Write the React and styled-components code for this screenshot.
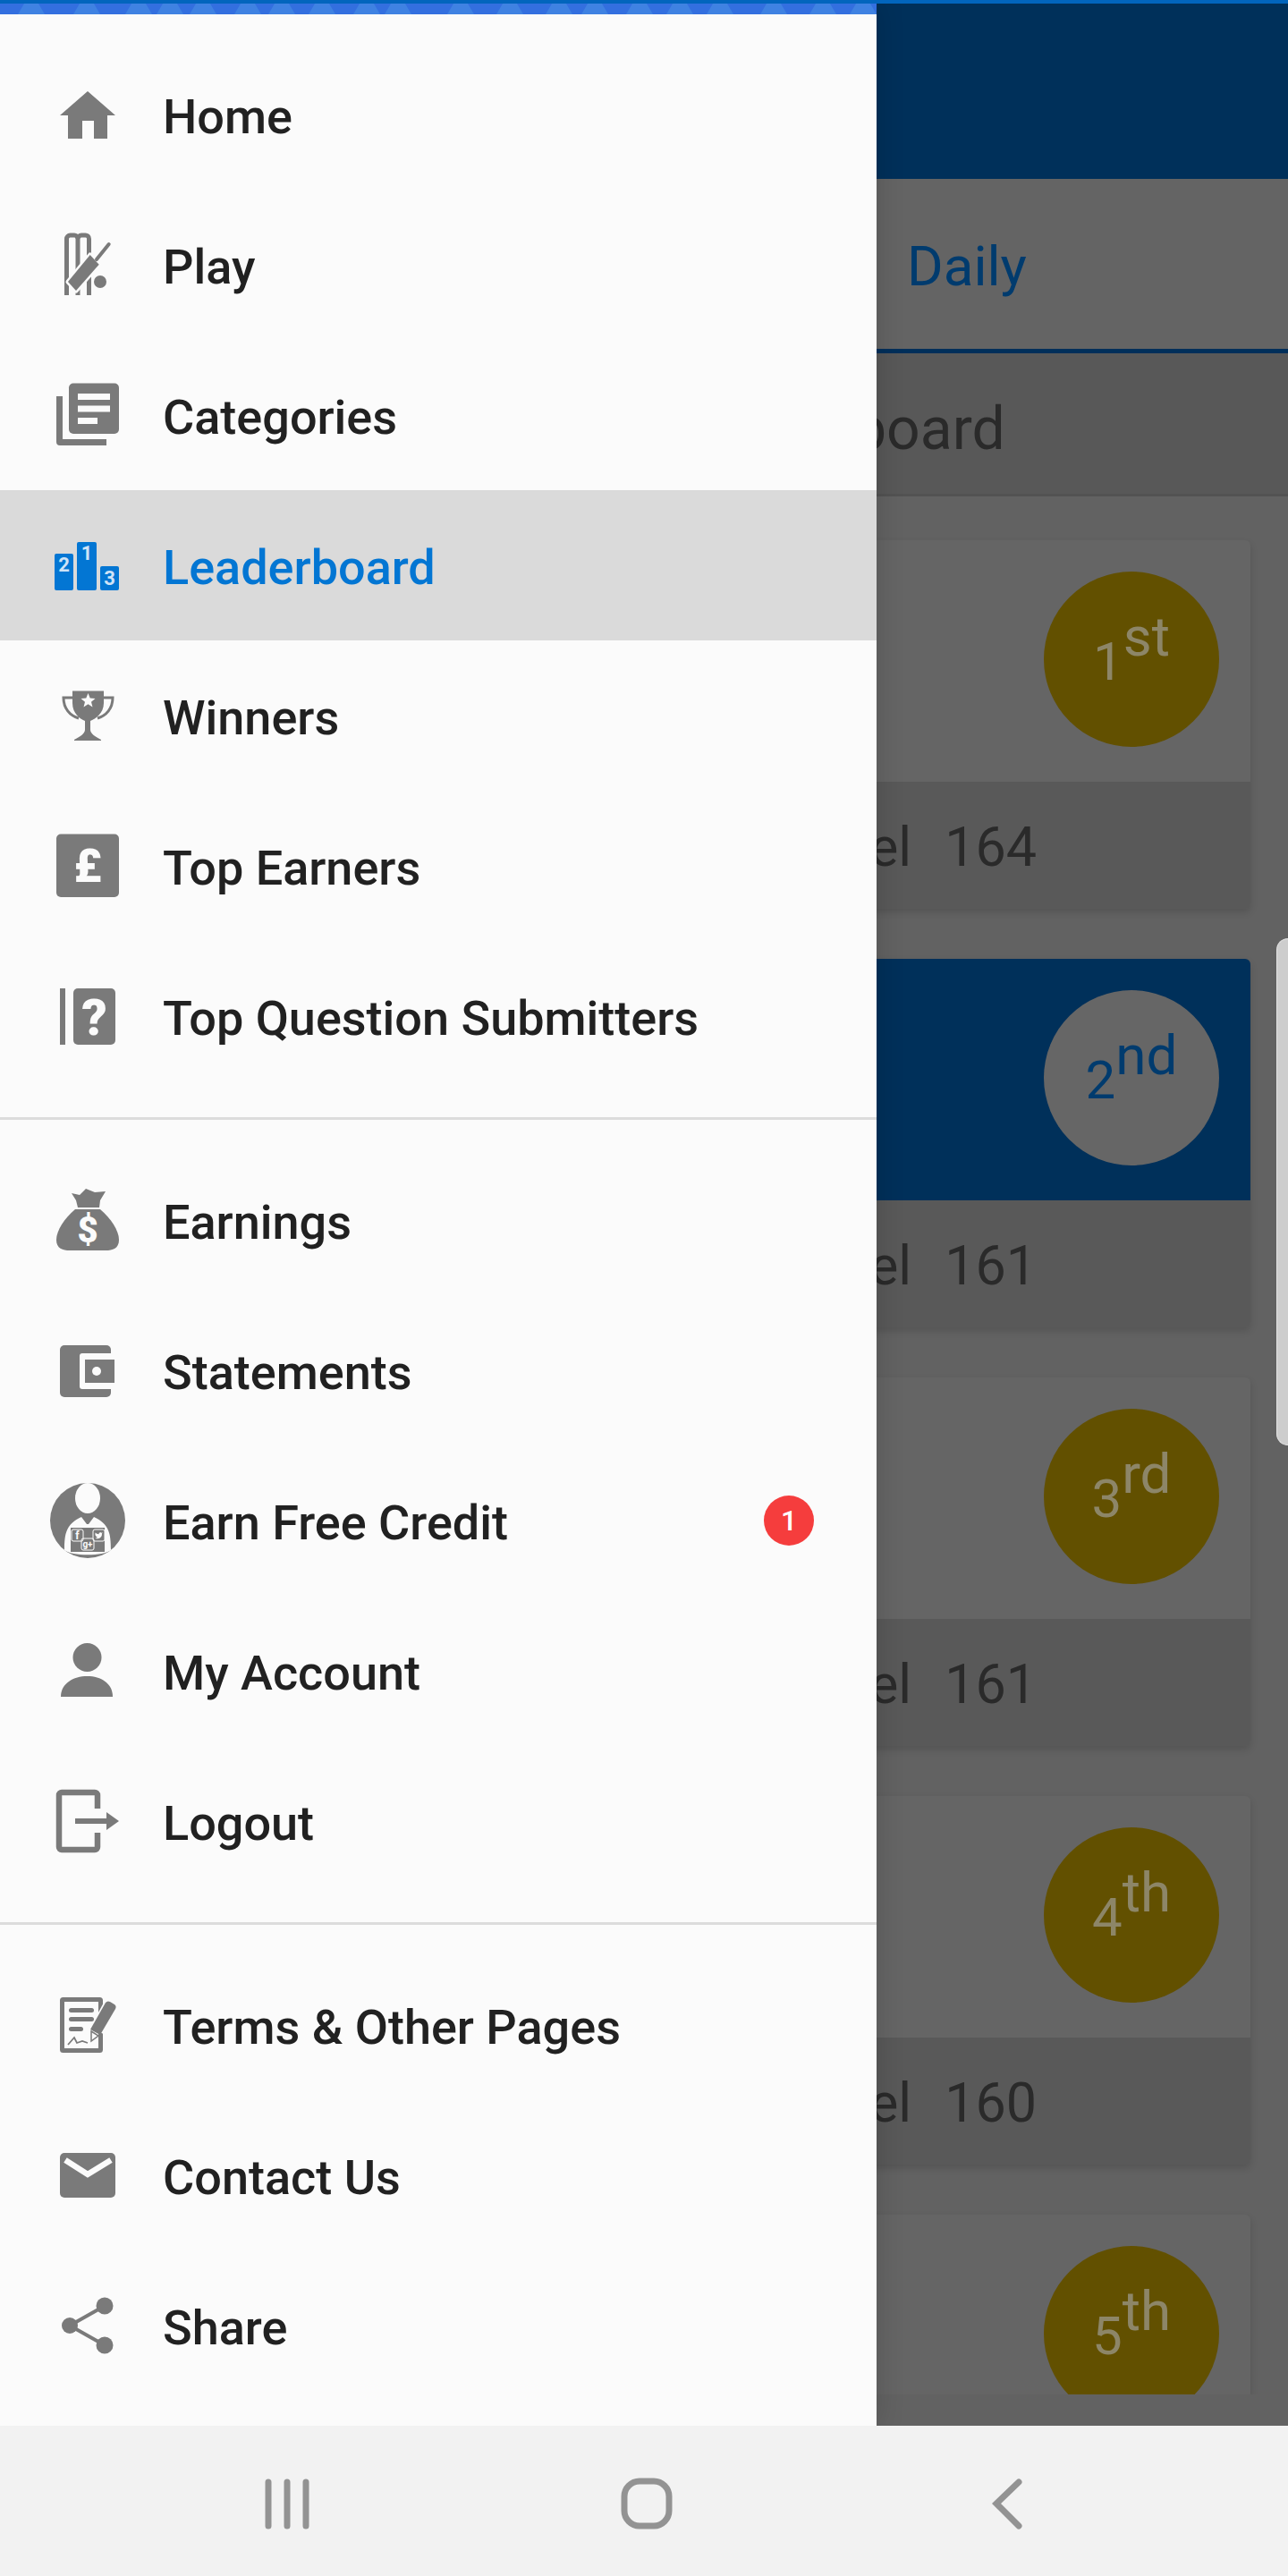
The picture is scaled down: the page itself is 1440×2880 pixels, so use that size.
import React from "react";
import styled, { createGlobalStyle } from "styled-components";

const Global = createGlobalStyle`
  html, body { margin: 0; padding: 0; background: #f2f2f2; }
  body { font-family: Roboto, "Liberation Sans", sans-serif; }
  * { box-sizing: border-box; }
`;

const Screen = styled.div`
  width: 1440px;
  height: 2880px;
  display: flex;
  flex-direction: column;
  overflow: hidden;
`;
const StatusStrip = styled.div`
  height: 4px;
  flex: none;
  background: #0265bd;
`;
const Main = styled.div`
  position: relative;
  flex: 1;
  min-height: 0;
  overflow: hidden;
`;

/* page under the drawer, dimmed */
const Page = styled.div`
  height: 100%;
  display: flex;
  flex-direction: column;
  background: #626262;
`;
const AppBar = styled.div`
  height: 196px;
  flex: none;
  background: #00305a;
`;
const Tabs = styled.div`
  height: 195px;
  flex: none;
  display: flex;
  align-items: center;
  padding: 6px 0 0 1014px;
  background: #646464;
  border-bottom: 5px solid #002f5a;
`;
const Tab = styled.span`
  font-size: 62px;
  line-height: 70px;
  color: #003b6e;
`;
const TitleBar = styled.div`
  height: 160px;
  flex: none;
  display: flex;
  align-items: center;
  padding: 12px 0 0 753px;
  background: #585858;
  border-bottom: 3px solid #525252;
`;
const Title = styled.span`
  font-size: 66px;
  line-height: 80px;
  color: #2a2a2a;
`;
const Scroller = styled.div`
  flex: 1;
  min-height: 0;
  overflow: hidden;
  display: flex;
  flex-direction: column;
  gap: 56px;
  padding: 49px 42px 0;
`;
const PageFoot = styled.div`
  height: 35px;
  flex: none;
`;
const Card = styled.div`
  flex: none;
  border-radius: 6px;
  overflow: hidden;
  box-shadow: 0 4px 8px rgba(0, 0, 0, 0.14);
`;
const CardTop = styled.div`
  height: 270px;
  display: flex;
  justify-content: flex-end;
  padding: 35px 35px 0 0;
  background: ${(p) => (p.$highlight ? "#00305a" : "#656565")};
`;
const RankCircle = styled.div`
  width: 196px;
  height: 196px;
  border-radius: 50%;
  display: flex;
  align-items: center;
  justify-content: center;
  padding-top: 6px;
  background: ${(p) => (p.$highlight ? "#666666" : "#625000")};
  color: ${(p) => (p.$highlight ? "#003b6e" : "#8d8668")};
  font-size: 60px;
  line-height: 70px;
`;
const RankSup = styled.span`
  font-size: 62px;
  position: relative;
  top: -28px;
`;
const CardFoot = styled.div`
  height: 142px;
  display: flex;
  align-items: center;
  gap: 37px;
  padding: 4px 0 0 836px;
  background: #595959;
  font-size: 61px;
  line-height: 70px;
  color: #2a2a2a;
`;
const EdgeHandle = styled.div`
  position: absolute;
  right: 0;
  top: 1045px;
  width: 13px;
  height: 567px;
  background: #cdcdcd;
  border-radius: 14px 0 0 14px;
  border: 1px solid #e4e4e4;
  border-right: 0;
`;

/* drawer */
const Drawer = styled.aside`
  position: absolute;
  left: 0;
  top: 0;
  bottom: 0;
  width: 980px;
  background: #fbfbfb;
  box-shadow: 0 0 30px rgba(0, 0, 0, 0.16);
`;
const BannerArt = styled.svg`
  display: block;
  width: 980px;
  height: 12px;
`;
const List = styled.div`
  padding-top: 28px;
`;
const Row = styled.div`
  height: 168px;
  display: flex;
  align-items: center;
  padding: 0 70px 0 52px;
  background: ${(p) => (p.$active ? "#dadada" : "transparent")};
  color: ${(p) => (p.$active ? "#0376d3" : "#7a7a7a")};
`;
const Icon = styled.svg`
  flex: none;
  width: 92px;
  height: 92px;
  margin-right: 38px;
`;
const Label = styled.span`
  flex: 1;
  padding-top: 5px;
  font-size: 54px;
  line-height: 64px;
  font-weight: 500;
  color: ${(p) => (p.$active ? "#0376d3" : "#212121")};
`;
const Badge = styled.span`
  flex: none;
  width: 56px;
  height: 56px;
  border-radius: 50%;
  display: flex;
  align-items: center;
  justify-content: center;
  background: #f53d3d;
  color: #fff;
  font-size: 32px;
  font-weight: 500;
`;
const Divider = styled.hr`
  height: 3px;
  margin: 29px 0 28px;
  border: 0;
  background: #dcdcdc;
`;

/* system navigation */
const NavBar = styled.nav`
  height: 168px;
  flex: none;
  display: flex;
  justify-content: center;
  align-items: center;
  padding: 6px 0 0 6px;
  background: #f2f2f2;
`;
const NavSlot = styled.div`
  width: 402px;
  display: flex;
  justify-content: center;
`;
const NavGlyph = styled.svg`
  width: 70px;
  height: 70px;
  fill: none;
  stroke: #939393;
  stroke-width: 7;
  stroke-linecap: round;
`;

const Svg = ({ children }) => (
  <Icon viewBox="0 0 92 92" fill="currentColor">{children}</Icon>
);
const W = "#fbfbfb";
const F = "Roboto, sans-serif";

const HomeIcon = () => (
  <Svg><path d="M46 20 77 47H68V73H53V53H40V73H24V47H15Z" /></Svg>
);
const PlayIcon = () => (
  <Svg>
    <g fill="none" stroke="currentColor" strokeWidth="5">
      <path d="M22.500 80V17a4 4 0 0 1 4-4h4a4 4 0 0 1 4.500 4V80" />
      <path d="M35 17a4 4 0 0 1 4-4h4a4 4 0 0 1 4.500 4V80" />
    </g>
    <path d="M48.700 35 58.700 45.700 33 75 24 65Z" stroke={W} strokeWidth="5" paintOrder="stroke" strokeLinejoin="round" />
    <path d="M56 40 69.700 23" fill="none" stroke="currentColor" strokeWidth="4" strokeLinecap="round" />
    <circle cx="60" cy="65" r="7" />
  </Svg>
);
const CategoriesIcon = () => (
  <Svg>
    <path d="M11 25h7v48h49v7H15a4 4 0 0 1-4-4Z" />
    <rect x="25" y="10.500" width="56" height="56.500" rx="5" />
    <g fill={W}>
      <rect x="35" y="22" width="36" height="7" />
      <rect x="35" y="35.500" width="36" height="7" />
      <rect x="35" y="49" width="22" height="7" />
    </g>
  </Svg>
);
const PodiumIcon = () => (
  <Svg>
    <rect x="9" y="33" width="21" height="41" rx="2" />
    <rect x="34" y="20" width="22" height="54" rx="2" />
    <rect x="60" y="47" width="21" height="27" rx="2" />
    <g fill="#cfe3f7" fontSize="22" fontWeight="700" textAnchor="middle" fontFamily={F}>
      <text x="19.500" y="53">2</text>
      <text x="45" y="40">1</text>
      <text x="70.500" y="68">3</text>
    </g>
  </Svg>
);
const TrophyIcon = () => (
  <Svg>
    <path d="M29 18.500H64V32C64 44 54 50 49 52V62C49 66 55 70 61 73V74H31V73C37 70 43 66 43 62V52C38 50 29 44 29 32Z" />
    <path d="M29 26H19C19 38 26 46 36 49M64 26H74C74 38 67 46 57 49" fill="none" stroke="currentColor" strokeWidth="3" />
    <path d="M46.500 21 48.700 26.500 54.500 27 50 30.700 51.500 36.500 46.500 33.300 41.500 36.500 43 30.700 38.500 27 44.300 26.500Z" fill={W} />
  </Svg>
);
const PoundIcon = () => (
  <Svg>
    <rect x="11" y="10.500" width="70" height="70.500" rx="5" />
    <text x="46" y="64" fill={W} fontSize="52" fontWeight="900" textAnchor="middle" fontFamily={F}>£</text>
  </Svg>
);
const QuestionIcon = () => (
  <Svg>
    <rect x="15" y="15" width="6" height="63" />
    <rect x="30" y="15" width="47" height="63" rx="5" />
    <text x="53.500" y="67" fill={W} fontSize="56" fontWeight="900" textAnchor="middle" fontFamily={F}>?</text>
  </Svg>
);
const BagIcon = () => (
  <Svg>
    <path d="M28 16 37 18 44 11 54 15 66 14 60 24 59 32H35L33 24Z" />
    <path d="M32 34H60C72 44 81 58 81 68 81 78 74 80 66 80H26C18 80 11 78 11 68 11 58 20 44 32 34Z" />
    <text x="46" y="71" fill={W} fontSize="40" fontWeight="900" textAnchor="middle" fontFamily={F}>$</text>
  </Svg>
);
const WalletIcon = () => (
  <Svg>
    <rect x="15" y="18" width="57" height="58" rx="5" />
    <rect x="37" y="27" width="43" height="40" rx="3" fill={W} />
    <rect x="43" y="34" width="33" height="26" />
    <circle cx="56" cy="47" r="5" fill={W} />
  </Svg>
);
const AvatarIcon = () => (
  <Svg>
    <circle cx="46" cy="46" r="42" />
    <ellipse cx="46" cy="21" rx="14" ry="17" fill={W} />
    <path d="M20 79C20 60 22 50 39 42L45 50 47 50 53 42C70 50 72 60 72 79 64 86 28 86 20 79Z" fill={W} />
    <rect x="27" y="54" width="38" height="27" />
    <g fill="none" stroke={W} strokeWidth="1">
      <rect x="28" y="56" width="13" height="13" rx="2" />
      <rect x="52" y="56" width="13" height="13" rx="2" />
      <rect x="39" y="66" width="14" height="13" rx="2" />
    </g>
    <g fill={W} fontFamily={F} fontWeight="700" textAnchor="middle">
      <text x="34.500" y="67" fontSize="12">f</text>
      <text x="46" y="76" fontSize="10">g+</text>
    </g>
    <path transform="translate(53.500 57.500) scale(.42)" fill={W} d="M22 4s-.7 2.100-2 3.400c1.600 10-9.400 17.300-18 11.600 2.200.1 4.400-.6 6-2C3 15.500.5 9.600 3 5c2.200 2.600 5.600 4.100 9 4-.9-4.200 4-6.600 7-3.800 1.100 0 3-1.200 3-1.200z" />
  </Svg>
);
const PersonIcon = () => (
  <Svg>
    <circle cx="45.500" cy="31" r="16" />
    <path d="M16 75C16 60 30 52 45.500 52 61 52 74 60 74 75Z" />
  </Svg>
);
const LogoutIcon = () => (
  <Svg>
    <path d="M57 32V17a3 3 0 0 0-3-3H17a3 3 0 0 0-3 3V75a3 3 0 0 0 3 3H54a3 3 0 0 0 3-3V59" fill="none" stroke="currentColor" strokeWidth="6.500" />
    <rect x="32" y="43" width="36" height="6" />
    <path d="M67 36 81 46 67 56Z" />
  </Svg>
);
const TermsIcon = () => (
  <Svg>
    <rect x="17.500" y="17.500" width="43" height="57" rx="1" fill="none" stroke="currentColor" strokeWidth="5" />
    <rect x="25" y="27" width="28" height="5" rx="2.500" />
    <rect x="25" y="37" width="28" height="5" rx="2.500" />
    <rect x="25" y="48" width="16" height="5" rx="2.500" />
    <path d="M24 68 31 60 34 66 40 64 46 66" fill="none" stroke="currentColor" strokeWidth="1.800" />
    <path d="M72 27 58 53" fill="none" stroke={W} strokeWidth="20" />
    <path d="M66 21a4 4 0 0 1 5-1l5 3a4 4 0 0 1 1 5L60 57 49 51Z" />
    <path d="M50 53 58 58 50 64Z" stroke="currentColor" strokeWidth="1.500" fill={W} />
  </Svg>
);
const MailIcon = () => (
  <Svg>
    <rect x="15" y="21" width="62" height="50" rx="5" />
    <path d="M21 29 46 45 72 29" fill="none" stroke={W} strokeWidth="6.500" />
  </Svg>
);
const ShareIcon = () => (
  <Svg>
    <path d="M65 24 26 46 65 68" fill="none" stroke="currentColor" strokeWidth="4" />
    <circle cx="65" cy="24" r="9.500" />
    <circle cx="26" cy="46" r="9" />
    <circle cx="65" cy="68" r="9.500" />
  </Svg>
);

const groups = [
  [
    { label: "Home", icon: HomeIcon },
    { label: "Play", icon: PlayIcon },
    { label: "Categories", icon: CategoriesIcon },
    { label: "Leaderboard", icon: PodiumIcon, active: true },
    { label: "Winners", icon: TrophyIcon },
    { label: "Top Earners", icon: PoundIcon },
    { label: "Top Question Submitters", icon: QuestionIcon },
  ],
  [
    { label: "Earnings", icon: BagIcon },
    { label: "Statements", icon: WalletIcon },
    { label: "Earn Free Credit", icon: AvatarIcon, badge: 1 },
    { label: "My Account", icon: PersonIcon },
    { label: "Logout", icon: LogoutIcon },
  ],
  [
    { label: "Terms & Other Pages", icon: TermsIcon },
    { label: "Contact Us", icon: MailIcon },
    { label: "Share", icon: ShareIcon },
  ],
];

const ranks = [
  { n: "1", s: "st", level: 164 },
  { n: "2", s: "nd", level: 161, highlight: true },
  { n: "3", s: "rd", level: 161 },
  { n: "4", s: "th", level: 160 },
  { n: "5", s: "th" },
];

const stripes = [20, 82, 140, 175, 212, 262, 300, 345, 395, 430, 500, 555, 610, 650, 700, 745, 790, 850, 905, 950];

export default function App() {
  return (
    <Screen>
      <Global />
      <StatusStrip />
      <Main>
        <Page>
          <AppBar />
          <Tabs><Tab>Daily</Tab></Tabs>
          <TitleBar><Title>Leaderboard</Title></TitleBar>
          <Scroller>
            {ranks.map((r) => (
              <Card key={r.n}>
                <CardTop $highlight={r.highlight}>
                  <RankCircle $highlight={r.highlight}>
                    {r.n}<RankSup>{r.s}</RankSup>
                  </RankCircle>
                </CardTop>
                {r.level && <CardFoot><span>Level</span><span>{r.level}</span></CardFoot>}
              </Card>
            ))}
          </Scroller>
          <PageFoot />
        </Page>
        <EdgeHandle />
        <Drawer>
          <BannerArt viewBox="0 0 980 12">
            <rect width="980" height="12" fill="#336fdf" />
            {stripes.map((x) => (
              <path key={x} d={`M${x} 12l7-12h16l7 12Z`} fill="#3f82e2" />
            ))}
          </BannerArt>
          <List>
            {groups.map((g, i) => (
              <React.Fragment key={i}>
                {i > 0 && <Divider />}
                {g.map(({ label, icon: I, active, badge }) => (
                  <Row key={label} $active={active}>
                    <I />
                    <Label $active={active}>{label}</Label>
                    {badge && <Badge>{badge}</Badge>}
                  </Row>
                ))}
              </React.Fragment>
            ))}
          </List>
        </Drawer>
      </Main>
      <NavBar>
        <NavSlot>
          <NavGlyph viewBox="0 0 70 70"><path d="M14 11V60M35 11V60M56 11V60" /></NavGlyph>
        </NavSlot>
        <NavSlot>
          <NavGlyph viewBox="0 0 70 70"><rect x="10" y="10" width="50" height="50" rx="17" /></NavGlyph>
        </NavSlot>
        <NavSlot>
          <NavGlyph viewBox="0 0 70 70"><path d="M49 11 24 35 49 60" /></NavGlyph>
        </NavSlot>
      </NavBar>
    </Screen>
  );
}
